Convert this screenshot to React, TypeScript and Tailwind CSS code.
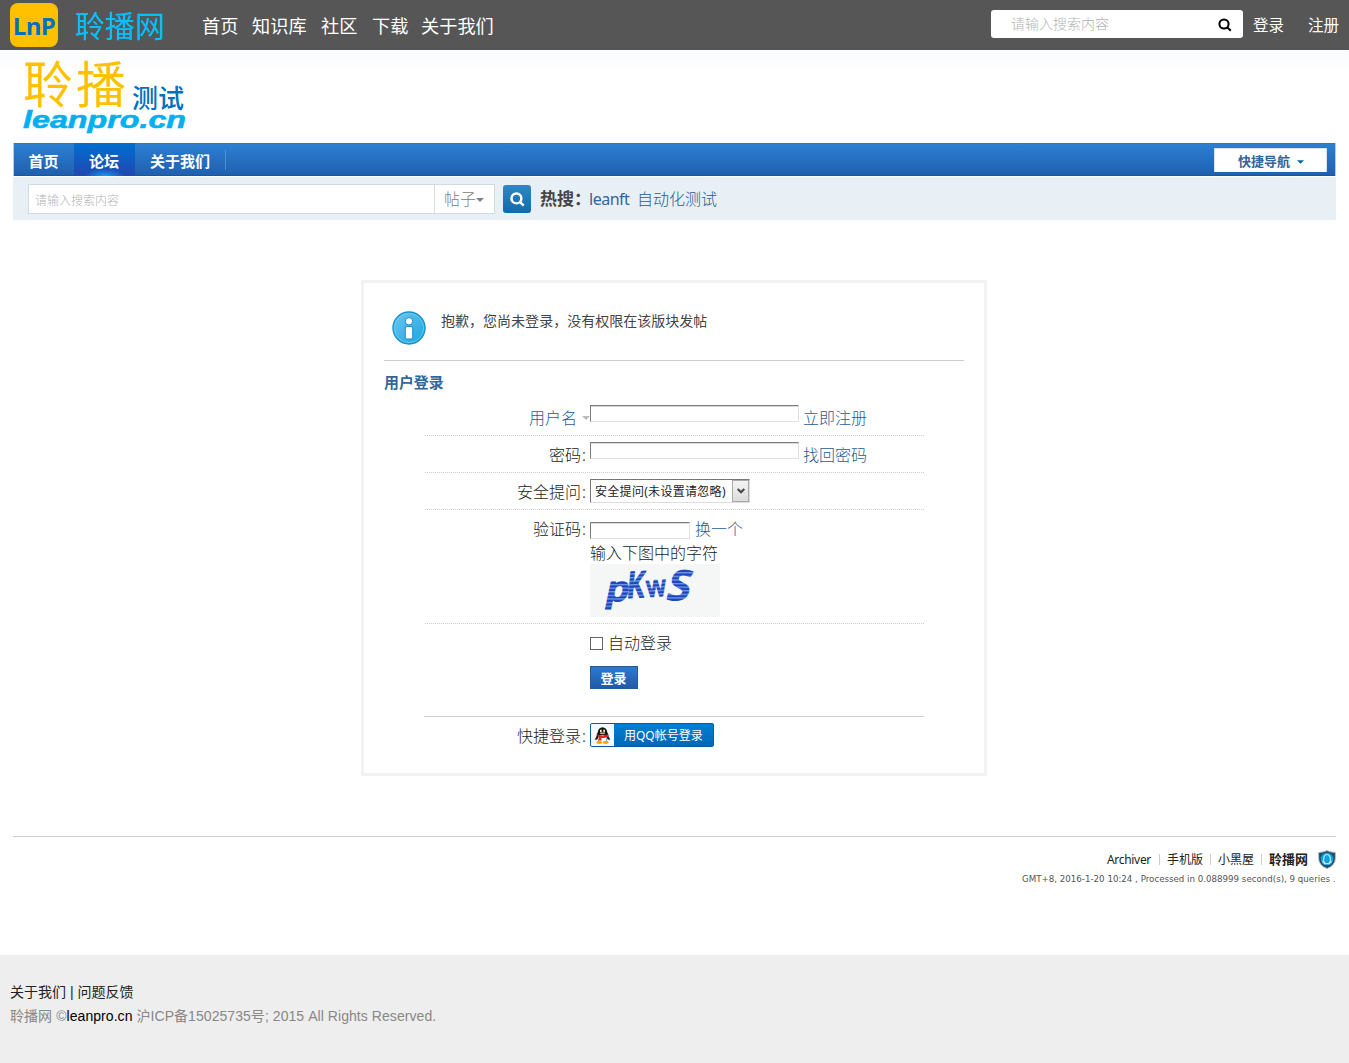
import React from 'react';

const sansCjk = "font-['Noto_Sans','Noto_Sans_CJK_SC',sans-serif]";

function Magnifier({ className, width = 2 }: { className: string; width?: number }) {
  return (
    <svg viewBox="0 0 14 14" className={className} fill="none" stroke="currentColor" strokeWidth={width}>
      <circle cx="6" cy="6" r="4.6" />
      <path d="M9.2 9.2L12.8 12.8" />
    </svg>
  );
}

function Caret({ className }: { className: string }) {
  return (
    <svg viewBox="0 0 8 4" className={className} fill="currentColor">
      <path d="M0 0H8L4 4Z" />
    </svg>
  );
}

function TopBar() {
  return (
    <header className="flex h-[50px] items-start bg-[#565656] text-white">
      <div className="mt-[3px] ml-[10px] h-[44px] w-12 rounded-lg bg-[#ffc000] text-center font-['Open_Sans'] text-[24px] leading-[46px] font-bold tracking-[-0.6px] text-[#0070c0]">LnP</div>
      <div className="ml-[17px] w-[94px] text-[30px] leading-[52px] text-[#00c0ff]">聆播网</div>
      <nav className="ml-[33px] flex gap-[14px] text-[18.2px] leading-[52px] whitespace-nowrap">
        <a className="w-[36px]">首页</a>
        <a className="w-[55px]">知识库</a>
        <a className="w-[37px]">社区</a>
        <a className="w-[35px]">下载</a>
        <a>关于我们</a>
      </nav>
      <div className="mt-[10px] ml-auto flex h-7 w-[252px] items-center justify-between rounded-[3px] bg-white pr-[11px] pl-5">
        <span className="text-[14px] leading-[26px] font-light text-[#b3b3b3]">请输入搜索内容</span>
        <Magnifier className="mt-px size-[14px] text-black" />
      </div>
      <div className="ml-[10px] flex gap-6 pr-[10px] text-[15.5px] leading-[50px]">
        <a>登录</a>
        <a>注册</a>
      </div>
    </header>
  );
}

function SiteLogo() {
  return (
    <div className="h-[93px] bg-linear-to-b from-[#f9fbfc] to-white to-25% pl-[13px]">
      <svg viewBox="0 0 190 93" className="h-[93px] w-[190px] overflow-visible">
        <text x="10" y="52.5" textLength="103" className="fill-[#ffc000] text-[50px] font-normal">聆播</text>
        <text x="119" y="57.5" textLength="52" className="fill-[#0070c0] text-[26px] font-medium">测试</text>
        <text x="10" y="77.500" textLength="163" lengthAdjust="spacingAndGlyphs" strokeWidth="0.6" className="fill-[#00b0f0] stroke-[#00b0f0] font-['Liberation_Sans'] text-[24.5px] font-bold italic">leanpro.cn</text>
      </svg>
    </div>
  );
}

function MainNav() {
  return (
    <nav className="mx-[13px] flex h-[33px] items-start border-r border-l border-[#b3cde8] bg-linear-to-b from-[#2d80d4] to-[#1f5fae] text-[15px] leading-[36px] font-bold text-white shadow-[inset_0_1px_0_#2f78bd,inset_0_-1px_0_#1a5596]">
      <a className="w-[60px] pr-px text-center">首页</a>
      <a className="h-[33px] w-[61px] bg-[radial-gradient(ellipse_20px_7px_at_50%_100%,#159bf5_0%,transparent_100%),linear-gradient(#006fd0,#2048b0)] pr-px text-center">论坛</a>
      <a className="w-[90px] text-center">关于我们</a>
      <span className="mt-[7px] h-5 w-px bg-[#4b8fd3]" />
      <div className="mt-[5px] mr-2 ml-auto flex h-6 w-[113px] items-center border-t border-r border-l border-[#d7e2ee] bg-white pl-[23px] text-[13px] leading-6 text-[#336699]">
        快捷导航
        <Caret className="mt-0.5 ml-[7px] h-1 w-[7px] text-[#0066a8]" />
      </div>
    </nav>
  );
}

function SearchBar() {
  return (
    <div className="mx-[13px] mt-px flex h-[43px] items-start bg-[#e8eff5] pl-[15px]">
      <div className="mt-[7px] flex h-[30px] w-[467px] border border-[#ceddde] bg-white">
        <span className="w-[406px] border-r border-[#ddd] pl-[6px] text-[12px] leading-[32px] font-light text-[#b3b3b3]">请输入搜索内容</span>
        <span className="flex items-center pl-[9px] text-[16px] leading-[30px] font-light text-[#808080]">
          帖子
          <Caret className="mt-0.5 h-1 w-2" />
        </span>
      </div>
      <button className="mt-2 ml-2 grid h-7 w-7 place-items-center rounded-[3px] bg-linear-to-b from-[#2f87c5] to-[#116aa9] text-white">
        <Magnifier className="size-[15px]" width={2.3} />
      </button>
      <div className="ml-[9px] flex text-[16px] leading-[44px] text-[#336699]">
        <b className="w-[49px] text-[17px] leading-[43px] whitespace-nowrap text-[#444]">热搜：</b>
        <a className="w-[48px] tracking-[-0.5px]">leanft</a>
        <a className="font-light text-[#265c92]">自动化测试</a>
      </div>
    </div>
  );
}

const field = 'block h-[17px] border border-t-[#7c7c7c] border-l-[#7c7c7c] border-r-[#e1e1e1] border-b-[#e1e1e1] bg-white shadow-[inset_0_1px_0_#d9d9d9]';

function Row({ label, className, children }: { label?: React.ReactNode; className: string; children: React.ReactNode }) {
  return (
    <div className={'flex ' + className}>
      <div className="flex w-[165px] shrink-0 justify-end pr-[3px] whitespace-nowrap">{label}</div>
      {children}
    </div>
  );
}

function Label({ text }: { text: string }) {
  return (
    <span className="flex gap-px pt-[7px] pr-px">
      {text}
      <span>:</span>
    </span>
  );
}

function InfoIcon() {
  return (
    <svg viewBox="0 0 34 34" className="mt-[28px] size-[34px]">
      <defs>
        <linearGradient id="infoFill" x1="0" y1="0" x2="1" y2="1">
          <stop offset="0" stopColor="#6cc8f1" />
          <stop offset="1" stopColor="#1ba3dc" />
        </linearGradient>
      </defs>
      <circle cx="17" cy="17" r="16" fill="url(#infoFill)" stroke="#1493cb" strokeWidth="1.4" />
      <circle cx="17" cy="17" r="14.6" fill="none" stroke="#6fcdf2" strokeWidth="0.8" />
      <circle cx="17" cy="10.3" r="3.7" fill="#fff" stroke="#118fc7" />
      <rect x="13.3" y="15.5" width="7.4" height="12.5" rx="1.8" fill="#fff" stroke="#118fc7" />
    </svg>
  );
}

function Captcha() {
  return (
    <svg viewBox="0 0 130 53" className="block h-[53px] w-[130px] overflow-visible bg-[#f4f7f5]">
      <defs>
        <pattern id="stripes" width="4" height="3.6" patternUnits="userSpaceOnUse">
          <rect width="4" height="3.6" fill="#1b45b8" />
          <rect y="1" width="4" height="1.2" fill="#7fa2f2" />
        </pattern>
      </defs>
      <g fill="url(#stripes)" stroke="url(#stripes)" strokeWidth="1.4" strokeLinejoin="round" className="font-['Noto_Sans'] font-semibold">
        <text transform="translate(14.5 37) skewX(-12) scale(1.05 1)" fontSize="35">p</text>
        <text transform="translate(36 34) rotate(-3) skewX(-8) scale(.76 1)" fontSize="36">K</text>
        <text transform="translate(56 33) rotate(-4) scale(.9 1)" fontSize="29" className="font-['DejaVu_Sans'] font-normal">w</text>
        <text transform="translate(75 36) skewX(-14) scale(1.02 1)" fontSize="41">S</text>
      </g>
    </svg>
  );
}

function Penguin() {
  return (
    <svg viewBox="0 0 17 17" className="size-[17px]">
      <ellipse cx="8.5" cy="9" rx="6" ry="6" fill="#1a1a1a" />
      <path d="M3.6 8L.6 12.5L3 12.8ZM13.4 8L16.4 12.5L14 12.8Z" fill="#1a1a1a" />
      <ellipse cx="8.5" cy="5.5" rx="4.7" ry="5.2" fill="#111" />
      <ellipse cx="8.5" cy="11.6" rx="4.3" ry="3.7" fill="#fff" />
      <ellipse cx="7" cy="3.9" rx="1.1" ry="1.5" fill="#fff" />
      <ellipse cx="10" cy="3.9" rx="1.1" ry="1.5" fill="#fff" />
      <circle cx="7.3" cy="4.1" r=".5" />
      <circle cx="9.7" cy="4.1" r=".5" />
      <ellipse cx="8.5" cy="6.3" rx="2.8" ry=".9" fill="#f5a800" />
      <path d="M2.8 7.2Q8.5 9.6 14.2 7.2L14.2 9.7Q10 11.2 7.5 10.8V13.4H4.8V10.2Z" fill="#e3231b" />
      <ellipse cx="5.3" cy="15.5" rx="3" ry="1.4" fill="#f5a800" />
      <ellipse cx="11.7" cy="15.5" rx="3" ry="1.4" fill="#f5a800" />
    </svg>
  );
}

function LoginPanel() {
  return (
    <main className="mt-[60px] ml-[361px] h-[496px] w-[626px] border-[3px] border-[#f2f2f2] px-5 text-[16px] leading-6 font-light text-[#222]">
      <div className="flex h-[78px] border-b border-[#ccc] pl-2">
        <InfoIcon />
        <p className="ml-[15px] text-[14px] leading-[76px] font-normal tracking-[0.02px] text-[#444]">抱歉，您尚未登录，没有权限在该版块发帖</p>
      </div>
      <h3 className="h-[40px] text-[14.9px] leading-[42px] font-bold text-[#336699]">用户登录</h3>
      <div className="ml-[41px] w-[499px] text-[#222]">
        <Row
          className="h-[35px] border-b border-dotted border-[#ccc]"
          label={
            <span className="-mr-[3px] flex items-center text-[#265c92]">
              <span className="-mt-px">用户名</span>
              <Caret className="ml-[5px] h-1 w-2 text-[#bbb]" />
            </span>
          }
        >
          <span className={field + ' mt-[4px] w-[209px]'} />
          <a className="mt-[5px] ml-[4px] text-[#265c92]">立即注册</a>
        </Row>
        <Row className="h-[37px] border-b border-dotted border-[#ccc]" label={<Label text="密码" />}>
          <span className={field + ' mt-[6px] w-[209px]'} />
          <a className="mt-[7px] ml-[4px] text-[#265c92]">找回密码</a>
        </Row>
        <Row className="h-[37px] border-b border-dotted border-[#ccc]" label={<Label text="安全提问" />}>
          <div className="mt-[6px] flex h-6 w-[160px] border border-t-[#777] border-r-[#ddd] border-b-[#ddd] border-l-[#777]">
            <span className="flex-1 pl-1 text-[12px] leading-[24px] font-normal tracking-[0.3px] whitespace-nowrap">安全提问(未设置请忽略)</span>
            <span className="grid w-[17px] place-items-center border border-[#aaa] bg-linear-to-b from-[#f4f4f4] to-[#dcdcdc]">
              <svg viewBox="0 0 8 6" className="h-[6px] w-2" fill="none" stroke="#444" strokeWidth="2">
                <path d="M.7 1L4 4.3L7.3 1" />
              </svg>
            </span>
          </div>
        </Row>
        <Row className="h-[114px] border-b border-dotted border-[#ccc]" label={<Label text="验证码" />}>
          <div>
            <div className="flex h-[31px]">
              <span className={field + ' mt-[12px] w-[100px]'} />
              <a className="mt-[7px] ml-[5px] text-[#265c92]">换一个</a>
            </div>
            <p className="h-[23px]">输入下图中的字符</p>
            <Captcha />
          </div>
        </Row>
        <Row className="h-[42px]">
          <span className="mt-[13px] size-[13px] border border-[#666] bg-white" />
          <span className="mt-[7px] ml-[5px]">自动登录</span>
        </Row>
        <Row className="h-[50px]">
          <button className="h-[23px] w-12 border border-[#235994] bg-linear-to-b from-[#2d7ad0] to-[#2159a7] pr-px text-[13px] leading-[23px] font-bold text-white">登录</button>
        </Row>
        <Row className="-ml-px h-[40px] w-[500px] border-t border-[#ccc] pl-px" label={<Label text="快捷登录" />}>
          <button className="mt-[6px] flex h-6 w-[124px] overflow-hidden rounded-[2px] border border-[#0b5c9e] bg-linear-to-b from-[#0080d0] to-[#0067b8]">
            <span className="flex h-full w-[23px] shrink-0 items-center justify-center bg-[#f5f9fc]"><Penguin /></span>
            <span className="pl-[10px] text-[12px] leading-[24px] font-normal whitespace-nowrap text-white">用QQ帐号登录</span>
          </button>
        </Row>
      </div>
    </main>
  );
}

function Shield() {
  return (
    <svg viewBox="0 0 18 19" className="ml-[10px] h-[19px] w-[18px]">
      <path d="M9 .6Q12.5 2.3 17.4 2.5V8Q17.4 15.5 9 18.6Q.6 15.5 .6 8V2.5Q5.5 2.3 9 .6Z" fill="#244c66" stroke="#b5bfc6" />
      <circle cx="9" cy="9" r="6.3" fill="#0da0dc" />
      <path d="M5 12.5Q4.4 11.5 5.7 9.5C5.5 2.8 12.5 2.8 12.3 9.5Q13.6 11.5 13 12.5L11.7 11.7Q10.7 13.5 12.2 13.7H5.8Q7.3 13.5 6.3 11.7Z" fill="none" stroke="#b6ecfd" strokeWidth="1.2" />
    </svg>
  );
}

function Separator() {
  return <span className="mx-[7px] h-[11px] w-px bg-[#ccc]" />;
}

function PageFooter() {
  return (
    <>
      <div className="mx-[13px] mt-[60px] h-[119px] border-t border-[#ccc] text-[#222]">
        <div className="mt-[13px] flex h-[19px] items-center justify-end text-[12px] leading-[18px]">
          <span className="w-[45px] tracking-[-0.3px] whitespace-nowrap">Archiver</span>
          <Separator />
          <span>手机版</span>
          <Separator />
          <span>小黑屋</span>
          <Separator />
          <b className="text-[13px] leading-[17px]">聆播网</b>
          <Shield />
        </div>
        <svg viewBox="0 0 315 16" className="mt-px ml-auto block h-4 w-[315px] overflow-visible">
          <text x="1" y="12" textLength="313.5" className="fill-[#555] font-['DejaVu_Sans'] text-[9.3px]" lengthAdjust="spacingAndGlyphs">GMT+8, 2016-1-20 10:24 , Processed in 0.088999 second(s), 9 queries .</text>
        </svg>
      </div>
      <footer className="h-[108px] bg-[#eee] pt-[25px] pl-[10px] font-['Liberation_Sans','Noto_Sans_CJK_SC',sans-serif] text-[14px] leading-6 text-[#222]">
        <p>关于我们 | 问题反馈</p>
        <p className="tracking-[0.06px] text-[#888]">聆播网 ©<span className="text-black">leanpro.cn</span> 沪ICP备15025735号; 2015 All Rights Reserved.</p>
      </footer>
    </>
  );
}

export default function App() {
  return (
    <div className={'h-[1063px] w-[1349px] overflow-hidden bg-white ' + sansCjk} lang="zh-CN">
      <TopBar />
      <SiteLogo />
      <MainNav />
      <SearchBar />
      <LoginPanel />
      <PageFooter />
    </div>
  );
}
